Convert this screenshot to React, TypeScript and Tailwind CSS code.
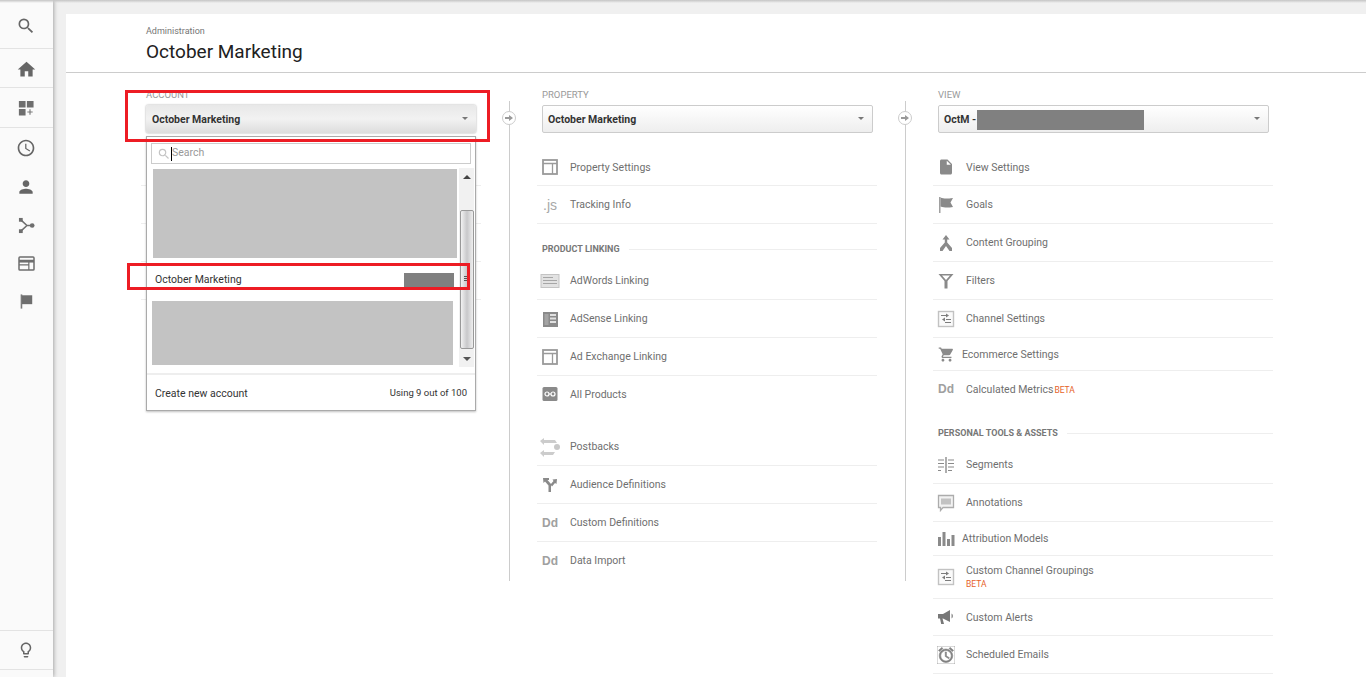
import React from "react";
import {
  MdSearch,
  MdHome,
  MdAccessTime,
  MdPerson,
  MdLightbulbOutline,
  MdInsertDriveFile,
  MdShoppingCart,
  MdAlarm,
} from "react-icons/md";

const Svg = ({ w = 18, h = 18, vb = "0 0 18 18", children }: { w?: number; h?: number; vb?: string; children: React.ReactNode }) => (
  <svg width={w} height={h} viewBox={vb} className="block shrink-0">
    {children}
  </svg>
);

const LayoutIcon = () => (
  <Svg>
    <rect x="2" y="2" width="14" height="14" fill="none" stroke="#9a9a9a" strokeWidth="1.800" />
    <path d="M2 5.500h14M11.500 5.500V16" fill="none" stroke="#9a9a9a" strokeWidth="1.300" />
  </Svg>
);
const AdWordsIcon = () => (
  <Svg w={20} h={16} vb="0 0 20 16">
    <rect x="1" y="1.500" width="18" height="13" fill="#e2e2e2" stroke="#c4c4c4" />
    <path d="M3 4.500h10M3 7.500h14M3 10.500h14" stroke="#a6a6a6" strokeWidth="1" />
  </Svg>
);
const AdSenseIcon = () => (
  <Svg>
    <rect x="2" y="2" width="15" height="15" fill="#8a8a8a" />
    <path d="M9 4h6v2H9zM9 7.500h6v2H9zM9 11h6v2H9z" fill="#e0e0e0" />
    <rect x="3.500" y="4" width="4" height="11" fill="#a4a4a4" />
  </Svg>
);
const ProductsIcon = () => (
  <Svg>
    <rect x="1.500" y="1" width="15" height="14" rx="1.500" fill="#8a8a8a" />
    <circle cx="6" cy="8" r="2" fill="none" stroke="#fff" strokeWidth="1.200" />
    <circle cx="12" cy="8" r="2" fill="none" stroke="#fff" strokeWidth="1.200" />
    <path d="M8 8h2" stroke="#fff" />
  </Svg>
);
const PostbacksIcon = () => (
  <Svg w={22} h={22} vb="0 0 22 22">
    <path d="M1 5l4-3v2h11l2 3H5v2zM1 17l4-3v2h11l-2 3H5v2z" fill="#cccccc" />
    <circle cx="18" cy="11" r="3" fill="#c8c8c8" />
  </Svg>
);
const AudienceIcon = () => (
  <Svg>
    <path d="M2 2h6v2L6.500 4 10 8v8H7.500V9.500L4 5.500 2.500 7zM16 3l-.5 5-1.500-1-3 3.500-1.500-2L12.500 5 11.500 3.500z" fill="#8a8a8a" />
  </Svg>
);
const Dd = () => <span className="font-['Liberation_Sans',sans-serif] text-[12px] font-bold leading-none text-[#a0a0a0]">Dd</span>;
const Js = () => <span className="font-['Liberation_Sans',sans-serif] text-[14px] leading-none text-[#a8a8a8]">.js</span>;
const GoalsIcon = () => (
  <Svg>
    <path d="M2 1h1.500v16H2z" fill="#a0a0a0" />
    <path d="M3.500 1.500c3 1 5 1.500 12.500 .5l-2.500 4.500 2.500 4.500c-6 1-9 .5-12.500-.5z" fill="#8a8a8a" />
  </Svg>
);
const GroupingIcon = () => (
  <Svg>
    <path d="M9 1l3.500 4.500H10.200v3L15 14v3h-2.500l-3.500-5-3.500 5H3v-3l4.800-5.500v-3H5.500z" fill="#8a8a8a" />
  </Svg>
);
const FilterIcon = () => (
  <Svg>
    <path d="M1.500 2h15l-6 7v7.500h-3V9zM5 3.500l4 4.500 4-4.500z" fill="#8a8a8a" fillRule="evenodd" />
  </Svg>
);
const ChannelIcon = () => (
  <Svg>
    <rect x="1.500" y="1.500" width="15" height="15" fill="#fafafa" stroke="#c2c2c2" strokeWidth="1.400" />
    <path d="M4 5.500h5M8 12.500h6M9 9.500h5" stroke="#7c7c7c" strokeWidth="1.200" />
    <path d="M9 3.500l3 2-3 2zM8 7.500l-3 2 3 2z" fill="#7c7c7c" />
  </Svg>
);
const SegmentsIcon = () => (
  <Svg>
    <path d="M9 1v16" stroke="#9a9a9a" strokeWidth="1.600" />
    <path d="M1 4h6M1 7.500h6M1 11h6M1 14.500h3M11 4h6M11 7.500h6M11 11h6M11 14.500h4" stroke="#8a8a8a" strokeWidth="1.200" />
  </Svg>
);
const AnnotationIcon = () => (
  <Svg>
    <path d="M1.500 1.500h15v12H6L3.500 16.500v-3h-2z" fill="#f2f2f2" stroke="#acacac" strokeWidth="1.300" />
    <path d="M4 4.500h10v6H4z" fill="#c2c2c2" />
  </Svg>
);
const AttributionIcon = () => (
  <Svg>
    <path d="M1 7h3v9H1zM5.500 2h3v14h-3zM10 9h3v7h-3zM14.500 5h3v11h-3z" fill="#8a8a8a" />
  </Svg>
);
const AlertIcon = () => (
  <Svg>
    <path d="M1 6h5l7-4v12l-7-3.500H5.500L7 16H4.200L3 10.500H1z" fill="#777777" />
    <path d="M14.500 5.500c2 1 2 4 0 5z" fill="#8a8a8a" />
  </Svg>
);
const DashIcon = () => (
  <Svg w={16} h={16} vb="0 0 18 18">
    <path d="M1 1h7.500v7.500H1zM10 1h7.500v7.500H10zM1 10h7.500v7.500H1z" fill="#6e6e6e" />
    <path d="M13.500 10.500v6M10.500 13.500h6" stroke="#7a7a7a" strokeWidth="1.300" />
  </Svg>
);
const ShareIcon = () => (
  <Svg w={17} h={17} vb="0 0 18 18">
    <path d="M3 3l6.500 6H15M9.500 9L3 15" fill="none" stroke="#6e6e6e" strokeWidth="1.600" />
    <rect x="1" y="1" width="4" height="4" fill="#6e6e6e" />
    <rect x="1" y="13" width="4" height="4" fill="#6e6e6e" />
    <circle cx="15" cy="9" r="2.500" fill="#6e6e6e" />
  </Svg>
);
const WindowIcon = () => (
  <Svg w={17} h={15} vb="0 0 18 16">
    <rect x="1" y="1" width="16" height="14" rx="1" fill="none" stroke="#6e6e6e" strokeWidth="1.600" />
    <path d="M1 5.500h16" stroke="#6e6e6e" strokeWidth="3" />
    <path d="M1 9.500h10.500M11.500 6v9" fill="none" stroke="#6e6e6e" strokeWidth="1.300" />
  </Svg>
);
const SideFlag = () => (
  <Svg w={16} h={17} vb="0 0 18 18">
    <path d="M3 1h1.800v16H3z" fill="#7a7a7a" />
    <path d="M4.500 2h11.500v10H4.500z" fill="#6e6e6e" />
  </Svg>
);

const Beta = () => <span className="font-['Roboto',sans-serif] text-[8.500px] text-[#e6622a]">BETA</span>;

type RowT = { icon: React.ReactNode; label: string; h?: number; tight?: boolean; noBorder?: boolean; beta?: "inline" | "below"; first?: boolean };

const rowHeights: Record<number, string> = { 33: "h-[33px]", 34: "h-[34px]", 37: "h-[37px]", 38: "h-[38px]", 43: "h-[43px]" };

const Row = ({ icon, label, h = 38, tight, noBorder, beta, first }: RowT) => (
  <div className={`flex items-center border-b ${rowHeights[h]} ${noBorder ? "border-transparent" : "border-[#eeeeee]"}`}>
    <div className="flex w-[26px] shrink-0 items-center justify-center">{icon}</div>
    <div className={`${tight ? "ml-[3px]" : "ml-[7px]"} ${first ? "pt-[2px]" : ""} text-[10.500px] leading-[13px] text-[#6f6f6f]`}>
      {label}
      {beta === "inline" && (
        <span className="ml-[1px]">
          <Beta />
        </span>
      )}
      {beta === "below" && (
        <div className="mt-[1px] leading-[12px]">
          <Beta />
        </div>
      )}
    </div>
  </div>
);

const Heading = ({ text }: { text: string }) => (
  <div className="flex h-[38px] items-start pl-[5px] pt-[19px]">
    <span className="text-[9px] font-bold leading-[12px] text-[#777777]">{text}</span>
    <div className="ml-[9px] mt-[6px] h-px flex-1 bg-[#eeeeee]" />
  </div>
);

const Caret = () => <div className="mb-[2px] h-0 w-0 border-x-[3px] border-t-[3px] border-x-transparent border-t-[#777777]" />;
const ScrollCaret = () => <div className="h-0 w-0 border-x-[4px] border-t-[4px] border-x-transparent border-t-[#555555]" />;

const Select = ({ children, focused }: { children: React.ReactNode; focused?: boolean }) => (
  <div
    className={`ml-[5px] flex h-[28px] items-center justify-between rounded-[2px] pl-[5px] pr-[8px] pt-[1px] text-[10.500px] font-bold text-[#333333] ${
      focused
        ? "w-[330px] bg-gradient-to-b from-[#e8e8e8] via-[#f2f2f2] to-[#dddddd] pl-[6px] shadow-[0_0_2px_rgba(0,0,0,0.4)]"
        : "w-[331px] border border-[#cccccc] bg-gradient-to-b from-white to-[#eeeeee]"
    }`}
  >
    <div className="flex items-center">{children}</div>
    <Caret />
  </div>
);

const Label = ({ text }: { text: string }) => (
  <div className="mb-[5px] ml-[5px] h-[12px] pt-[1px] text-[9.500px] leading-[12px] text-[#999999]">{text}</div>
);

const Separator = () => (
  <div className="relative mt-[13px] flex h-[480px] w-[56px] shrink-0 justify-center">
    <div className="h-full w-px bg-[#cccccc]" />
    <div className="absolute left-[21px] top-[10px] flex h-[14px] w-[14px] items-center justify-center rounded-full border border-[#cccccc] bg-white">
      <svg width="8" height="8" viewBox="0 0 8 8" className="block">
        <path d="M0 3h4V1l4 3-4 3V5H0z" fill="#999999" />
      </svg>
    </div>
  </div>
);

const propertyA: RowT[] = [
  { icon: <LayoutIcon />, label: "Property Settings", first: true },
  { icon: <Js />, label: "Tracking Info" },
];
const propertyB: RowT[] = [
  { icon: <AdWordsIcon />, label: "AdWords Linking" },
  { icon: <AdSenseIcon />, label: "AdSense Linking" },
  { icon: <LayoutIcon />, label: "Ad Exchange Linking" },
  { icon: <ProductsIcon />, label: "All Products", noBorder: true },
];
const propertyC: RowT[] = [
  { icon: <PostbacksIcon />, label: "Postbacks" },
  { icon: <AudienceIcon />, label: "Audience Definitions" },
  { icon: <Dd />, label: "Custom Definitions" },
  { icon: <Dd />, label: "Data Import", noBorder: true },
];
const viewA: RowT[] = [
  { icon: <MdInsertDriveFile size={18} color="#8a8a8a" />, label: "View Settings", first: true },
  { icon: <GoalsIcon />, label: "Goals" },
  { icon: <GroupingIcon />, label: "Content Grouping" },
  { icon: <FilterIcon />, label: "Filters" },
  { icon: <ChannelIcon />, label: "Channel Settings" },
  { icon: <MdShoppingCart size={17} color="#8a8a8a" />, label: "Ecommerce Settings", h: 33, tight: true },
  { icon: <Dd />, label: "Calculated Metrics", h: 37, noBorder: true, beta: "inline", first: true },
];
const viewB: RowT[] = [
  { icon: <SegmentsIcon />, label: "Segments" },
  { icon: <AnnotationIcon />, label: "Annotations" },
  { icon: <AttributionIcon />, label: "Attribution Models", h: 34, tight: true },
  { icon: <ChannelIcon />, label: "Custom Channel Groupings", h: 43, beta: "below" },
  { icon: <AlertIcon />, label: "Custom Alerts", h: 37 },
  { icon: <MdAlarm size={18} color="#808080" stroke="#808080" strokeWidth={0.8} />, label: "Scheduled Emails" },
];

const NavItem = ({ children, className = "" }: { children: React.ReactNode; className?: string }) => (
  <div className={`flex items-center justify-center pr-[1px] ${className}`}>{children}</div>
);

const Dropdown = () => (
  <div className="absolute left-[5px] top-[48px] flex h-[275px] w-[330px] flex-col border border-[#aaaaaa] bg-white shadow-[0_1px_2px_rgba(0,0,0,0.25)]">
    <div className="mx-[4px] mt-[6px] flex h-[21px] items-center border border-[#cccccc] pl-[5px]">
      <MdSearch size={14} color="#c4c4c4" className="shrink-0" />
      <div className="h-[14px] w-px bg-black" />
      <span className="-mt-[2px] text-[10.500px] text-[#999999]">Search</span>
    </div>
    <div className="mt-[4px] flex h-[199px]">
      <div className="w-[312px] shrink-0">
        <div className="ml-[6px] mt-[1px] h-[89px] w-[304px] bg-[#c3c3c3]" />
        <div className="flex h-[43px] items-center justify-between pl-[8px] pr-[5px] text-[10.500px] text-[#333333]">
          <span className="pt-[1px]">October Marketing</span>
          <div className="h-[14px] w-[50px] bg-[#808080]" />
        </div>
        <div className="ml-[5px] h-[64px] w-[301px] bg-[#c3c3c3]" />
      </div>
      <div className="flex w-[15px] flex-col items-center bg-[#f1f1f1]">
        <div className="flex h-[42px] w-full justify-center pt-[7px]">
          <div className="h-0 w-0 border-x-[4px] border-b-[4px] border-x-transparent border-b-[#444444]" />
        </div>
        <div className="flex h-[139px] w-[14px] flex-col items-center gap-[1px] rounded-[2px] border border-[#999999] bg-gradient-to-r from-[#f2f2f2] via-[#c8c8ca] to-[#efefef] pt-[65px]">
          <div className="h-px w-[5px] bg-[#555555]" />
          <div className="h-px w-[5px] bg-[#555555]" />
          <div className="h-px w-[5px] bg-[#555555]" />
        </div>
        <div className="flex w-full justify-center pt-[8px]">
          <ScrollCaret />
        </div>
      </div>
    </div>
    <div className="mt-[6px] flex flex-1 items-center justify-between border-t-2 border-[#eeeeee] px-[8px] pt-[2px] text-[#333333]">
      <span className="text-[10.500px]">Create new account</span>
      <span className="text-[9.500px]">Using 9 out of 100</span>
    </div>
  </div>
);

export default function App() {
  return (
    <div className="relative flex h-[677px] w-full overflow-hidden bg-[#f0f0f0] font-['Roboto',sans-serif]">
      <aside className="z-10 flex w-[53px] shrink-0 flex-col bg-[#fafafa] shadow-[1px_0_4px_rgba(0,0,0,0.3)]">
        <NavItem className="h-[49px] border-b border-[#e3e3e3] pt-[4px]">
          <MdSearch size={20} color="#666666" />
        </NavItem>
        <NavItem className="h-[39px] border-b border-[#e3e3e3] pt-[2px]">
          <MdHome size={21} color="#666666" />
        </NavItem>
        <NavItem className="h-[40px] border-b border-[#e3e3e3]">
          <DashIcon />
        </NavItem>
        <div className="pt-[1px]">
          <NavItem className="h-[38px]">
            <MdAccessTime size={20} color="#666666" />
          </NavItem>
          <NavItem className="h-[39px]">
            <MdPerson size={20} color="#666666" />
          </NavItem>
          <NavItem className="h-[38px]">
            <ShareIcon />
          </NavItem>
          <NavItem className="h-[38px]">
            <WindowIcon />
          </NavItem>
          <NavItem className="h-[39px]">
            <SideFlag />
          </NavItem>
        </div>
        <div className="flex-1" />
        <NavItem className="mb-[7px] h-[40px] border-y border-[#e3e3e3]">
          <MdLightbulbOutline size={18} color="#666666" />
        </NavItem>
      </aside>

      <main className="ml-[13px] mt-[14px] min-w-0 flex-1 bg-white">
        <header className="h-[59px] border-b border-[#cccccc] pl-[80px] pt-[11px]">
          <div className="text-[9px] leading-[12px] text-[#757575]">Administration</div>
          <h1 className="mt-[2px] text-[19px] leading-[26px] text-[#212121]">October Marketing</h1>
        </header>

        <div className="flex pl-[75px] pt-[15px]">
          <section className="relative w-[340px] shrink-0">
            <Label text="ACCOUNT" />
            <Select focused>October Marketing</Select>
            <div className="mt-[15px]">
              <div className="h-[38px] border-b border-[#eeeeee]" />
              <div className="h-[38px] border-b border-[#eeeeee]" />
              <div className="h-[38px] border-b border-[#eeeeee]" />
              <div className="h-[38px] border-b border-[#eeeeee]" />
            </div>
            <Dropdown />
            <div className="absolute -left-[16px] top-[2px] h-[52px] w-[365px] border-[3px] border-[#ed1c24]" />
            <div className="absolute -left-[14px] top-[175px] h-[27px] w-[343px] border-[3px] border-[#ed1c24]" />
          </section>

          <Separator />

          <section className="w-[340px] shrink-0">
            <Label text="PROPERTY" />
            <Select>October Marketing</Select>
            <div className="mt-[15px]">
              {propertyA.map((r) => (
                <Row key={r.label} {...r} />
              ))}
              <Heading text="PRODUCT LINKING" />
              {propertyB.map((r) => (
                <Row key={r.label} {...r} />
              ))}
              <div className="h-[14px]" />
              {propertyC.map((r) => (
                <Row key={r.label} {...r} />
              ))}
            </div>
          </section>

          <Separator />

          <section className="w-[340px] shrink-0">
            <Label text="VIEW" />
            <Select>
              <span>OctM -</span>
              <div className="ml-[1px] h-[20px] w-[167px] bg-[#808080]" />
            </Select>
            <div className="mt-[15px]">
              {viewA.map((r) => (
                <Row key={r.label} {...r} />
              ))}
              <Heading text="PERSONAL TOOLS & ASSETS" />
              {viewB.map((r) => (
                <Row key={r.label} {...r} />
              ))}
            </div>
          </section>
        </div>
      </main>

      <div className="absolute inset-x-0 top-0 z-20 h-[3px] bg-gradient-to-b from-[#c4c4c4] to-transparent" />
    </div>
  );
}
